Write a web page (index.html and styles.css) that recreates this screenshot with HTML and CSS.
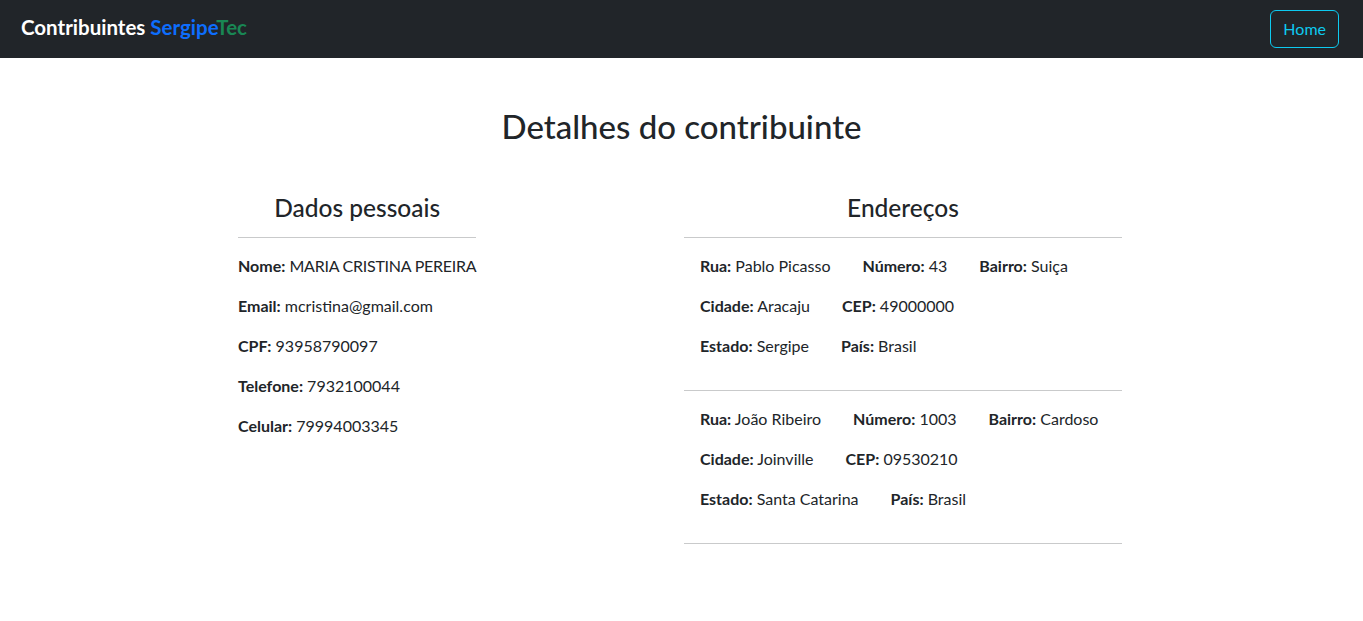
FILE: index.html
```html
<!DOCTYPE html>
<html lang="pt-BR">
<head>
<meta charset="utf-8">
<title>Detalhes do contribuinte</title>
<link rel="stylesheet" href="styles.css">
</head>
<body>
<nav class="navbar">
  <a class="brand" href="#">Contribuintes <span class="brand-blue">Sergipe</span><span class="brand-green">Tec</span></a>
  <a class="btn-home" href="#">Home</a>
</nav>
<main class="page">
  <h2 class="title">Detalhes do contribuinte</h2>
  <div class="columns">
    <section class="col-personal">
      <h4 class="col-title">Dados pessoais</h4>
      <hr class="rule">
      <p class="field"><strong>Nome:</strong> <span class="upper">MARIA CRISTINA PEREIRA</span></p>
      <p class="field"><strong>Email:</strong> mcristina@gmail.com</p>
      <p class="field"><strong>CPF:</strong> 93958790097</p>
      <p class="field"><strong>Telefone:</strong> 7932100044</p>
      <p class="field"><strong>Celular:</strong> 79994003345</p>
    </section>
    <section class="col-address">
      <h4 class="col-title">Endereços</h4>
      <hr class="rule">
      <div class="address">
        <div class="line"><span><strong>Rua:</strong> Pablo Picasso</span><span><strong>Número:</strong> 43</span><span><strong>Bairro:</strong> Suiça</span></div>
        <div class="line"><span><strong>Cidade:</strong> Aracaju</span><span><strong>CEP:</strong> 49000000</span></div>
        <div class="line"><span><strong>Estado:</strong> Sergipe</span><span><strong>País:</strong> Brasil</span></div>
      </div>
      <hr class="rule">
      <div class="address">
        <div class="line"><span><strong>Rua:</strong> João Ribeiro</span><span><strong>Número:</strong> 1003</span><span><strong>Bairro:</strong> Cardoso</span></div>
        <div class="line"><span><strong>Cidade:</strong> Joinville</span><span><strong>CEP:</strong> 09530210</span></div>
        <div class="line"><span><strong>Estado:</strong> Santa Catarina</span><span><strong>País:</strong> Brasil</span></div>
      </div>
      <hr class="rule">
    </section>
  </div>
</main>
</body>
</html>
```

FILE: styles.css
```css
* { box-sizing: border-box; }
html, body { margin: 0; padding: 0; }
body {
  font-family: Lato, "Noto Sans", sans-serif;
  font-size: 16px;
  line-height: 1.5;
  color: #212529;
  background: #fff;
}
.navbar {
  height: 58px;
  background: #212529;
  display: flex;
  align-items: center;
  justify-content: space-between;
  padding: 0 24px 0 21px;
}
.brand {
  color: #fff;
  text-decoration: none;
  font-size: 20.5px;
  font-weight: 700;
  line-height: 30px;
  margin-top: -5px;
}
.brand-blue { color: #0d6efd; }
.brand-green { color: #198754; }
.btn-home {
  display: inline-block;
  height: 38px;
  padding: 6px 12px;
  border: 1px solid #0dcaf0;
  border-radius: 6px;
  color: #0dcaf0;
  text-decoration: none;
  font-size: 16px;
  line-height: 24px;
}
.page { padding-top: 49px; }
.title {
  margin: 0 0 48px;
  text-align: center;
  font-size: 33px;
  font-weight: 500;
  line-height: 1.2;
}
.columns {
  width: 884px;
  margin-left: 238px;
  display: flex;
  justify-content: space-between;
  align-items: flex-start;
}
.col-title {
  margin: 0;
  font-size: 24.5px;
  font-weight: 500;
  line-height: 26px;
  text-align: center;
}
.rule {
  margin: 16px 0;
  border: 0;
  border-top: 1px solid #c9cacb;
  height: 0;
}
.field { margin: 0 0 16px; white-space: nowrap; }
.upper { letter-spacing: -0.25px; }
.col-address { width: 438px; }
.address {
  display: flex;
  flex-direction: column;
  padding: 0 16px;
  margin-bottom: 16px;
}
.line {
  display: flex;
  gap: 32px;
  margin-bottom: 16px;
  white-space: nowrap;
}
strong { font-weight: 700; }
```
